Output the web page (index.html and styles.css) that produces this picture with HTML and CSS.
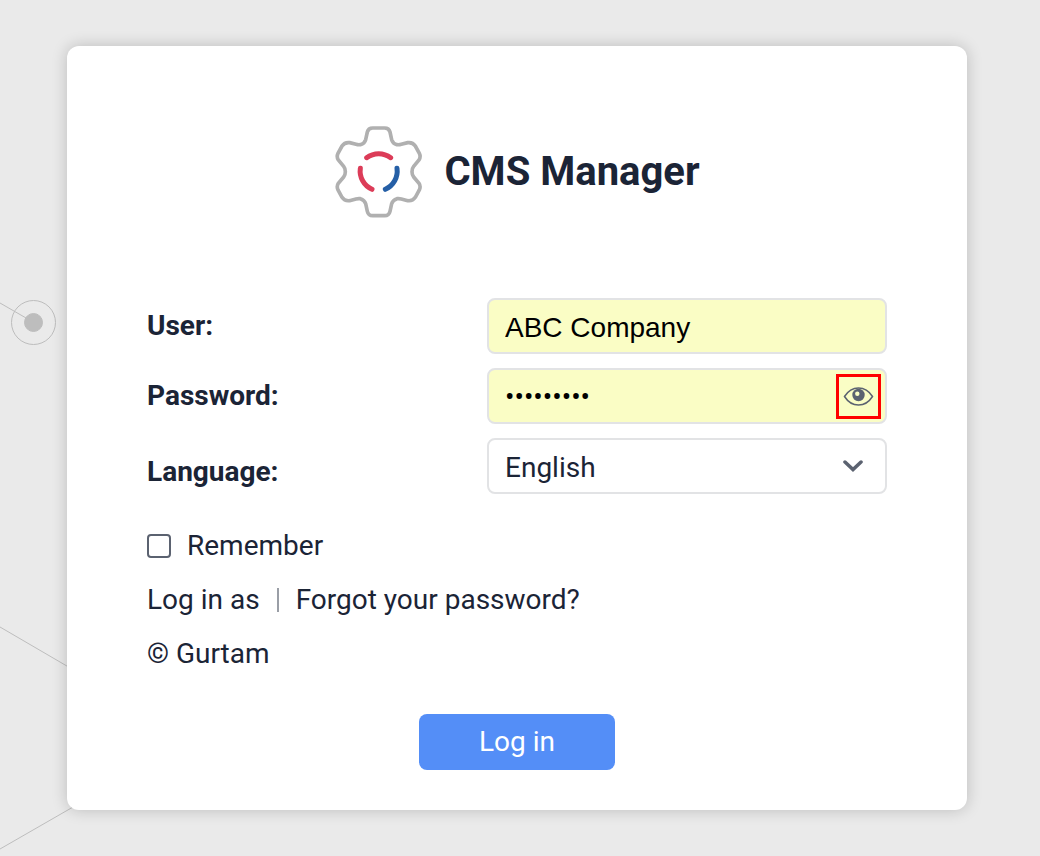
FILE: index.html
```
<!DOCTYPE html>
<html lang="en">
<head>
    <meta charset="UTF-8">
    <meta name="viewport" content="width=device-width, initial-scale=1">
    <title>CMS Manager</title>
    <link rel="stylesheet" href="styles.css">
</head>
<body>
    <svg class="bg" width="120" height="856" viewBox="0 0 120 856" aria-hidden="true">
        <path d="M0 303L33 322M0 627L120 697M0 849L120 780" />
        <circle cx="33.500" cy="322.500" r="22" />
        <circle class="bg-dot" cx="33.500" cy="322.500" r="9" />
    </svg>
    <main class="login">
        <div class="login-header">
            <svg class="logo" viewBox="43 48 264 276" aria-hidden="true">
                <path class="gear" d="M159 54H195Q208 54 211 66L216 89Q219 100 232 104Q238 105 245 103L264 98Q279 96 287 108L299 130Q304 141 298 150L282 169Q277 175 277 185Q277 195 282 201L298 220Q304 229 299 240L287 262Q279 274 264 272L245 267Q238 265 232 266Q219 270 216 281L211 304Q208 317 195 317H159Q146 317 143 304L138 281Q135 270 122 266Q116 265 109 267L90 272Q75 274 67 262L55 240Q50 229 56 220L72 201Q77 195 77 185Q77 175 72 169L56 150Q50 141 55 130L67 108Q75 96 90 98L109 103Q116 105 122 104Q135 100 138 89L143 66Q146 54 159 54Z" />
                <path class="arc" d="M141 143A60 60 0 0 1 213 143M122 175A60 60 0 0 0 157 238" />
                <path class="arc arc-blue" d="M232 175A60 60 0 0 1 197 238" />
            </svg>
            <h1>CMS Manager</h1>
        </div>
        <form>
            <div class="row">
                <label for="user">User:</label>
                <div class="field">
                    <input type="text" id="user" class="control filled" value="ABC Company">
                </div>
            </div>
            <div class="row">
                <label for="password">Password:</label>
                <div class="field">
                    <input type="password" id="password" class="control filled" value="password1">
                    <button type="button" class="show-password" aria-label="Show password">
                        <svg width="31" height="21" viewBox="0 0 31 21" aria-hidden="true">
                            <path class="eye" d="M1.500 10.500C5 5 10 2 15.500 2S26 5 29.500 10.500C26 16 21 19 15.500 19S5 16 1.500 10.500Z" />
                            <circle class="pupil" cx="15.500" cy="9" r="6.200" />
                            <circle class="glare" cx="14.300" cy="7.700" r="2.200" />
                        </svg>
                    </button>
                </div>
            </div>
            <div class="row row-language">
                <label for="language">Language:</label>
                <div class="field">
                    <select id="language" class="control">
                        <option>English</option>
                    </select>
                    <svg class="arrow" width="20" height="12" viewBox="0 0 20 12" aria-hidden="true">
                        <path d="M2 2L10 9.500L18 2" />
                    </svg>
                </div>
            </div>
            <div class="options">
                <label class="remember"><input type="checkbox"> Remember</label>
                <div class="links">
                    <a href="#">Log in as</a>
                    <span class="separator"></span>
                    <a href="#">Forgot your password?</a>
                </div>
                <div><a href="#">© Gurtam</a></div>
            </div>
            <button type="submit" class="submit">Log in</button>
        </form>
    </main>
</body>
</html>
```
FILE: styles.css
```
* { box-sizing: border-box;}
body {
    position: relative;
    margin: 0;
    padding: 46px 73px 46px 67px;
    font-family: Roboto, "Liberation Sans", sans-serif;
    font-size: 28px;
    line-height: 34px;
    color: #1b2436;
    background: #eaeaea;
}
a { color: inherit; text-decoration: none;}
svg { display: block;}
.bg {
    position: absolute;
    top: 0;
    left: 0;
    fill: none;
    stroke: #bdbdbd;
}
.bg-dot { fill: #bdbdbd;}
.login {
    position: relative;
    max-width: 900px;
    margin: 0 auto;
    padding: 80px 80px 40px;
    border-radius: 12px;
    background: #fff;
    box-shadow: 0 0 16px rgba(0, 0, 0, .2);
}
.login-header {
    display: flex;
    align-items: center;
    justify-content: center;
    gap: 22px;
    margin-bottom: 80px;
}
.logo { width: 88px; height: 92px; fill: none;}
.gear { stroke: #b0b0b0; stroke-width: 11;}
.arc { stroke: #dc3c58; stroke-width: 15; stroke-linecap: round;}
.arc-blue { stroke: #255fa6;}
h1 {
    margin: 0;
    font-size: 40px;
    line-height: 48px;
    font-weight: bold;
}
.row {
    display: flex;
    align-items: center;
    justify-content: space-between;
    margin-bottom: 14px;
    font-weight: bold;
}
.row-language { margin-bottom: 23px;}
.row-language .field { margin-bottom: 12px;}
.field { position: relative; flex: 0 1 400px;}
.control {
    display: block;
    width: 100%;
    height: 56px;
    padding: 3px 16px 0;
    border: 2px solid #e2e3e5;
    border-radius: 8px;
    font-family: inherit;
    font-size: 28px;
    color: inherit;
    background: #fff;
    appearance: none;
}
.filled {
    color: #000;
    background: #fafdc5;
}
#user { font-family: "Liberation Sans", Arial, sans-serif;}
#password { padding-top: 0;}
.show-password {
    position: absolute;
    top: 6px;
    right: 6px;
    display: flex;
    align-items: center;
    justify-content: center;
    width: 45px;
    height: 45px;
    padding: 0;
    border: 3px solid #f00;
    background: none;
}
.eye { fill: none; stroke: #5b6270; stroke-width: 1.5;}
.pupil { fill: #5b6270;}
.glare { fill: #fafdc5;}
.arrow {
    position: absolute;
    top: 22px;
    right: 24px;
    fill: none;
    stroke: #5b6270;
    stroke-width: 3.5;
    stroke-linecap: round;
    pointer-events: none;
}
.options {
    display: flex;
    flex-direction: column;
    align-items: flex-start;
    gap: 20px;
}
.remember { display: flex; align-items: center; gap: 16px;}
.remember input {
    width: 24px;
    height: 24px;
    margin: 0;
    border: 2px solid #5b6270;
    border-radius: 4px;
    appearance: none;
}
.remember input:checked { background: #548ef7;}
.links { display: flex; align-items: center; gap: 17px;}
.separator { width: 2px; height: 24px; background: #9a9ea6;}
.submit {
    display: block;
    margin: 43px auto 0;
    padding: 11px 60px;
    border: none;
    border-radius: 8px;
    font: inherit;
    color: #fff;
    background: #548ef7;
}
```
